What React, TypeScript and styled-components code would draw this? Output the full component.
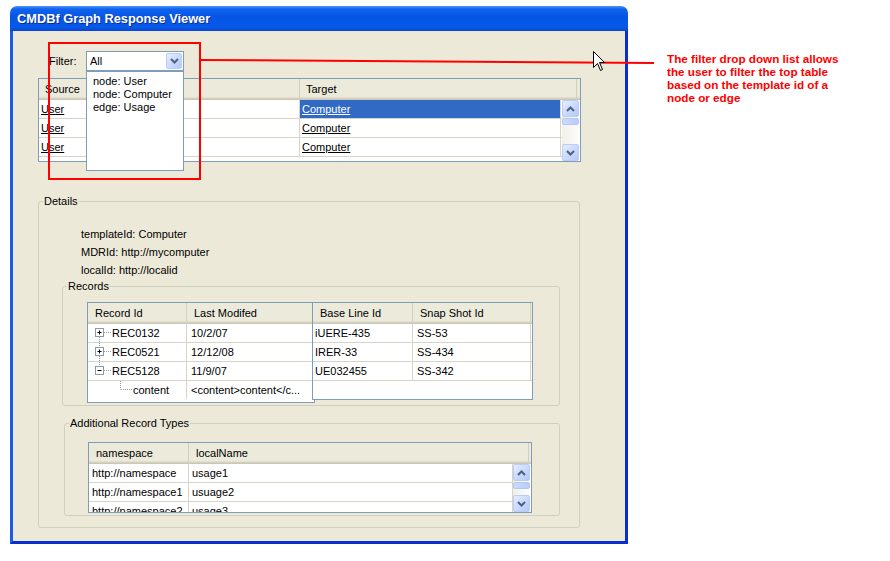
import React from "react";
import styled, { createGlobalStyle } from "styled-components";

const GlobalStyle = createGlobalStyle`
  html, body {
    margin: 0;
    padding: 0;
    background: #ffffff;
  }
  body {
    font-family: "Liberation Sans", Tahoma, Arial, sans-serif;
    font-size: 11px;
    color: #000000;
  }
`;

const BORDER = "#7F9DB9";
const GRID = "#D6D3C9";

type Col = { title: string; pad?: number };

const topRows = [
    { source: "User", target: "Computer", selected: true },
    { source: "User", target: "Computer", selected: false },
    { source: "User", target: "Computer", selected: false },
];

const records = [
    { id: "REC0132", modified: "10/2/07", baseLine: "iUERE-435", snapShot: "SS-53", open: false, pos: "first" },
    { id: "REC0521", modified: "12/12/08", baseLine: "IRER-33", snapShot: "SS-434", open: false, pos: "mid" },
    { id: "REC5128", modified: "11/9/07", baseLine: "UE032455", snapShot: "SS-342", open: true, pos: "last" },
];

const extraTypes = [
    { ns: "http://namespace", name: "usage1" },
    { ns: "http://namespace1", name: "usuage2" },
    { ns: "http://namespace2", name: "usage3" },
];

const Chevron = ({ up }: { up?: boolean }) => (
    <svg width="9" height="6" viewBox="0 0 9 6">
        <path
            d={up ? "M1 5 L4.5 1.5 L8 5" : "M1 1 L4.5 4.5 L8 1"}
            fill="none"
            stroke="#4D6185"
            strokeWidth="2"
        />
    </svg>
);

const Scroller = () => (
    <ScrollBar>
        <ScrollBtn>
            <Chevron up />
        </ScrollBtn>
        <ScrollThumb />
        <ScrollGap />
        <ScrollBtn>
            <Chevron />
        </ScrollBtn>
    </ScrollBar>
);

const TreeGlyph = ({ open, pos }: { open: boolean; pos: string }) => (
    <svg width="24" height="18" viewBox="0 0 24 18">
        {pos !== "first" && (
            <line x1="11.5" y1="0" x2="11.5" y2="4" stroke="#9A9A9A" strokeDasharray="1 1" />
        )}
        {pos !== "last" && (
            <line x1="11.5" y1="13" x2="11.5" y2="18" stroke="#9A9A9A" strokeDasharray="1 1" />
        )}
        <line x1="16" y1="8.5" x2="24" y2="8.5" stroke="#9A9A9A" strokeDasharray="1 1" />
        <rect x="7.5" y="4.5" width="8" height="8" fill="#fff" stroke="#8C9AA6" />
        <line x1="9.5" y1="8.5" x2="13.5" y2="8.5" stroke="#000" />
        {!open && <line x1="11.5" y1="6.5" x2="11.5" y2="10.5" stroke="#000" />}
    </svg>
);

const ChildGlyph = () => (
    <svg width="45" height="18" viewBox="0 0 45 18">
        <line x1="32.5" y1="0" x2="32.5" y2="8.5" stroke="#9A9A9A" strokeDasharray="1 1" />
        <line x1="33" y1="8.5" x2="44" y2="8.5" stroke="#9A9A9A" strokeDasharray="1 1" />
    </svg>
);

const HeadCells = ({ cols }: { cols: Col[] }) => (
    <>
        {cols.map((c, i) => (
            <HeadCell key={i} $pad={c.pad}>
                {c.title}
            </HeadCell>
        ))}
    </>
);

export default function App() {
    return (
        <>
            <GlobalStyle />
            <Page>
                <Window>
                    <TitleBar>
                        <Title>CMDBf Graph Response Viewer</Title>
                    </TitleBar>
                    <WindowBody>
                        <FilterRow>
                            <FilterLabel>Filter:</FilterLabel>
                            <Combo>
                                <span>All</span>
                                <ComboButton>
                                    <Chevron />
                                </ComboButton>
                                <DropList>
                                    <DropItem>node: User</DropItem>
                                    <DropItem>node: Computer</DropItem>
                                    <DropItem>edge: Usage</DropItem>
                                </DropList>
                            </Combo>
                        </FilterRow>

                        <ListView $w={543} $h={84} $mt={7}>
                            <HeadRow $cols="261px 277px 1fr">
                                <HeadCells cols={[{ title: "Source", pad: 6 }, { title: "Target", pad: 6 }, { title: "" }]} />
                            </HeadRow>
                            <ListBody>
                                <RowsArea>
                                    {topRows.map((r, i) => (
                                        <DataRow key={i} $cols="261px 261px">
                                            <DataCell $pad={2}>
                                                <Link>{r.source}</Link>
                                            </DataCell>
                                            <DataCell $pad={2} $selected={r.selected}>
                                                <Link>{r.target}</Link>
                                            </DataCell>
                                        </DataRow>
                                    ))}
                                </RowsArea>
                                <Scroller />
                            </ListBody>
                        </ListView>

                        <GroupBox $w={542} $h={333} $mt={33}>
                            <GroupLegend>Details</GroupLegend>
                            <GroupBody $pad="17px 19px 0 23px">
                                <DetailLine>templateId: Computer</DetailLine>
                                <DetailLine>MDRId: http://mycomputer</DetailLine>
                                <DetailLine>localId: http://localid</DetailLine>

                                <GroupBox $w={498} $mt={1}>
                                    <GroupLegend>Records</GroupLegend>
                                    <GroupBody $pad="9px 0 2px 24px">
                                        <TablePair>
                                            <ListView $w={228} $h={101}>
                                                <HeadRow $cols="99px 127px">
                                                    <HeadCells cols={[{ title: "Record Id" }, { title: "Last Modifed" }]} />
                                                </HeadRow>
                                                {records.map((r) => (
                                                    <DataRow key={r.id} $cols="99px 127px">
                                                        <DataCell $pad={0}>
                                                            <TreeGlyph open={r.open} pos={r.pos} />
                                                            {r.id}
                                                        </DataCell>
                                                        <DataCell $pad={4}>{r.modified}</DataCell>
                                                    </DataRow>
                                                ))}
                                                <DataRow $cols="99px 127px" $plain>
                                                    <DataCell $pad={0}>
                                                        <ChildGlyph />
                                                        content
                                                    </DataCell>
                                                    <DataCell $pad={4} $noRule>
                                                        {"<content>content</c..."}
                                                    </DataCell>
                                                </DataRow>
                                            </ListView>
                                            <ListView $w={221} $h={98} $overlap>
                                                <HeadRow $cols="100px 118px 1fr">
                                                    <HeadCells cols={[{ title: "Base Line Id" }, { title: "Snap Shot Id" }, { title: "" }]} />
                                                </HeadRow>
                                                {records.map((r) => (
                                                    <DataRow key={r.id} $cols="100px 118px">
                                                        <DataCell $pad={2}>{r.baseLine}</DataCell>
                                                        <DataCell $pad={4}>{r.snapShot}</DataCell>
                                                    </DataRow>
                                                ))}
                                            </ListView>
                                        </TablePair>
                                    </GroupBody>
                                </GroupBox>

                                <GroupBox $w={496} $mt={11} $ml={2}>
                                    <GroupLegend>Additional Record Types</GroupLegend>
                                    <GroupBody $pad="12px 0 2px 23px">
                                        <ListView $w={444} $h={71}>
                                            <HeadRow $cols="100px 340px 1fr">
                                                <HeadCells cols={[{ title: "namespace" }, { title: "localName" }, { title: "" }]} />
                                            </HeadRow>
                                            <ListBody>
                                                <RowsArea>
                                                    {extraTypes.map((t) => (
                                                        <DataRow key={t.ns} $cols="100px 1fr">
                                                            <DataCell $pad={3}>{t.ns}</DataCell>
                                                            <DataCell $pad={3}>{t.name}</DataCell>
                                                        </DataRow>
                                                    ))}
                                                </RowsArea>
                                                <Scroller />
                                            </ListBody>
                                        </ListView>
                                    </GroupBody>
                                </GroupBox>
                            </GroupBody>
                        </GroupBox>
                    </WindowBody>
                </Window>

                <Note>
                    <div>The filter drop down list allows</div>
                    <div>the user to filter the top table</div>
                    <div>based on the template id of a</div>
                    <div>node or edge</div>
                </Note>

                <Highlight />
                <Connector width="458" height="12" viewBox="0 0 458 12">
                    <line x1="1" y1="4" x2="455" y2="7" stroke="#FF0000" strokeWidth="2" />
                </Connector>
                <Pointer width="13" height="21" viewBox="0 0 13 21">
                    <path
                        d="M0.5 0.5 L0.5 16.5 L4.5 12.5 L7.5 19.5 L9.5 18.5 L6.5 11.5 L11.5 11.5 Z"
                        fill="#ffffff"
                        stroke="#000000"
                    />
                </Pointer>
            </Page>
        </>
    );
}

// ------------------------------------------------------------------------------------------------ //
// ---------------------------------------------- Style ------------------------------------------- //
// ------------------------------------------------------------------------------------------------ //

const Page = styled.div`
    position: relative;
    width: 890px;
    height: 561px;
    display: flex;
    align-items: flex-start;
    overflow: hidden;
`;

const Window = styled.div`
    margin: 6px 0 0 10px;
    width: 618px;
    height: 538px;
    flex-shrink: 0;
    display: flex;
    flex-direction: column;
`;

const TitleBar = styled.div`
    height: 25px;
    flex-shrink: 0;
    display: flex;
    align-items: center;
    padding: 0 0 1px 7px;
    box-sizing: border-box;
    border-radius: 7px 7px 0 0;
    background: linear-gradient(
        to bottom,
        #4A96FA 0%,
        #1163EE 12%,
        #0555E4 45%,
        #0659EA 85%,
        #0A45CF 100%
    );
`;

const Title = styled.span`
    color: #ffffff;
    font-weight: bold;
    font-size: 12.8px;
    text-shadow: 1px 1px 0 #0B2B9A;
`;

const WindowBody = styled.div`
    flex: 1;
    background: #ECE9D8;
    border: 3px solid #0A2FCE;
    border-left-color: #1B5BEA;
    border-top: none;
    padding: 20px 0 0 25px;
    display: flex;
    flex-direction: column;
    align-items: flex-start;
`;

const FilterRow = styled.div`
    display: flex;
    align-items: center;
    height: 20px;
    padding-left: 11px;
`;

const FilterLabel = styled.span`
    width: 37px;
`;

const Combo = styled.div`
    position: relative;
    width: 98px;
    height: 20px;
    box-sizing: border-box;
    border: 1px solid ${BORDER};
    background: #ffffff;
    display: flex;
    align-items: center;
    justify-content: space-between;
    padding-left: 3px;
`;

const ComboButton = styled.div`
    width: 16px;
    height: 16px;
    margin-right: 1px;
    box-sizing: border-box;
    border: 1px solid #BCCDF3;
    border-radius: 2px;
    background: linear-gradient(135deg, #E6EEFE 0%, #C9D8FC 55%, #B4C9F6 100%);
    display: flex;
    align-items: center;
    justify-content: center;
`;

const DropList = styled.div`
    position: absolute;
    left: -1px;
    top: 19px;
    width: 98px;
    height: 100px;
    box-sizing: border-box;
    border: 1px solid ${BORDER};
    background: #ffffff;
    padding: 3px 0 0 6px;
    z-index: 2;
`;

const DropItem = styled.div`
    line-height: 13px;
    white-space: nowrap;
`;

const ListView = styled.div<{ $w: number; $h: number; $overlap?: boolean; $mt?: number }>`
    width: ${({ $w }) => $w}px;
    height: ${({ $h }) => $h}px;
    margin-left: ${({ $overlap }) => ($overlap ? "-3px" : "0")};
    margin-top: ${({ $mt }) => $mt ?? 0}px;
    flex-shrink: 0;
    box-sizing: border-box;
    border: 1px solid ${BORDER};
    background: #ffffff;
    display: flex;
    flex-direction: column;
    overflow: hidden;
`;

const HeadRow = styled.div<{ $cols: string }>`
    display: grid;
    grid-template-columns: ${({ $cols }) => $cols};
    height: 21px;
    flex-shrink: 0;
    background: #EBEADB;
    box-shadow: inset 0 -1px 0 #CBC7B8, inset 0 -2px 0 #D6D2C2, inset 0 -3px 0 #E2DECD;
`;

const HeadCell = styled.div<{ $pad?: number }>`
    padding-left: ${({ $pad }) => $pad ?? 7}px;
    line-height: 20px;
    white-space: nowrap;
    overflow: hidden;
    border-right: 1px solid #D2CFC0;
`;

const ListBody = styled.div`
    flex: 1;
    display: flex;
    min-height: 0;
`;

const RowsArea = styled.div`
    flex: 1;
    display: flex;
    flex-direction: column;
    overflow: hidden;
`;

const DataRow = styled.div<{ $cols: string; $plain?: boolean }>`
    display: grid;
    grid-template-columns: ${({ $cols }) => $cols};
    height: 19px;
    flex-shrink: 0;
    box-sizing: border-box;
    border-bottom: 1px solid ${({ $plain }) => ($plain ? "transparent" : GRID)};
`;

const DataCell = styled.div<{ $pad?: number; $selected?: boolean; $noRule?: boolean }>`
    display: flex;
    align-items: center;
    padding-left: ${({ $pad }) => $pad ?? 3}px;
    border-right: 1px solid ${({ $noRule }) => ($noRule ? "transparent" : GRID)};
    white-space: nowrap;
    overflow: hidden;
    background: ${({ $selected }) => ($selected ? "#316AC5" : "transparent")};
    color: ${({ $selected }) => ($selected ? "#ffffff" : "#000000")};
`;

const Link = styled.span`
    text-decoration: underline;
`;

const ScrollBar = styled.div`
    width: 17px;
    flex-shrink: 0;
    margin-right: 1px;
    display: flex;
    flex-direction: column;
    background: linear-gradient(to right, #F1EFE8, #FDFDFA);
`;

const ScrollBtn = styled.div`
    height: 17px;
    flex-shrink: 0;
    box-sizing: border-box;
    border: 1px solid #BCCDF3;
    border-radius: 2px;
    background: linear-gradient(135deg, #E6EEFE 0%, #C9D8FC 55%, #B4C9F6 100%);
    display: flex;
    align-items: center;
    justify-content: center;
`;

const ScrollThumb = styled.div`
    height: 7px;
    margin-top: 1px;
    flex-shrink: 0;
    box-sizing: border-box;
    border: 1px solid #B4C7F2;
    border-radius: 2px;
    background: linear-gradient(to right, #CCDAFC, #B9CDF8);
`;

const ScrollGap = styled.div`
    flex: 1;
`;

const GroupBox = styled.fieldset<{ $w: number; $h?: number; $mt: number; $ml?: number }>`
    margin: ${({ $mt }) => $mt}px 0 0 ${({ $ml }) => $ml ?? 0}px;
    padding: 0;
    width: ${({ $w }) => $w}px;
    height: ${({ $h }) => ($h ? `${$h}px` : "auto")};
    box-sizing: border-box;
    min-width: 0;
    border: 1px solid #D0D0BF;
    border-radius: 3px;
`;

const GroupLegend = styled.legend`
    margin-left: 4px;
    padding: 0 1px;
    line-height: 13px;
    font-size: 11px;
`;

const GroupBody = styled.div<{ $pad: string }>`
    padding: ${({ $pad }) => $pad};
    display: flex;
    flex-direction: column;
    align-items: flex-start;
`;

const DetailLine = styled.div`
    margin-left: 19px;
    line-height: 18px;
`;

const TablePair = styled.div`
    display: flex;
    align-items: flex-start;
`;

const Note = styled.div`
    margin: 52px 0 0 39px;
    color: #FF0000;
    font-weight: bold;
    font-size: 11.7px;
    line-height: 13px;
    white-space: nowrap;
`;

const Highlight = styled.div`
    position: absolute;
    left: 48px;
    top: 42px;
    width: 153px;
    height: 138px;
    box-sizing: border-box;
    border: 2px solid #FF0000;
    pointer-events: none;
`;

const Connector = styled.svg`
    position: absolute;
    left: 199px;
    top: 56px;
`;

const Pointer = styled.svg`
    position: absolute;
    left: 593px;
    top: 51px;
`;
